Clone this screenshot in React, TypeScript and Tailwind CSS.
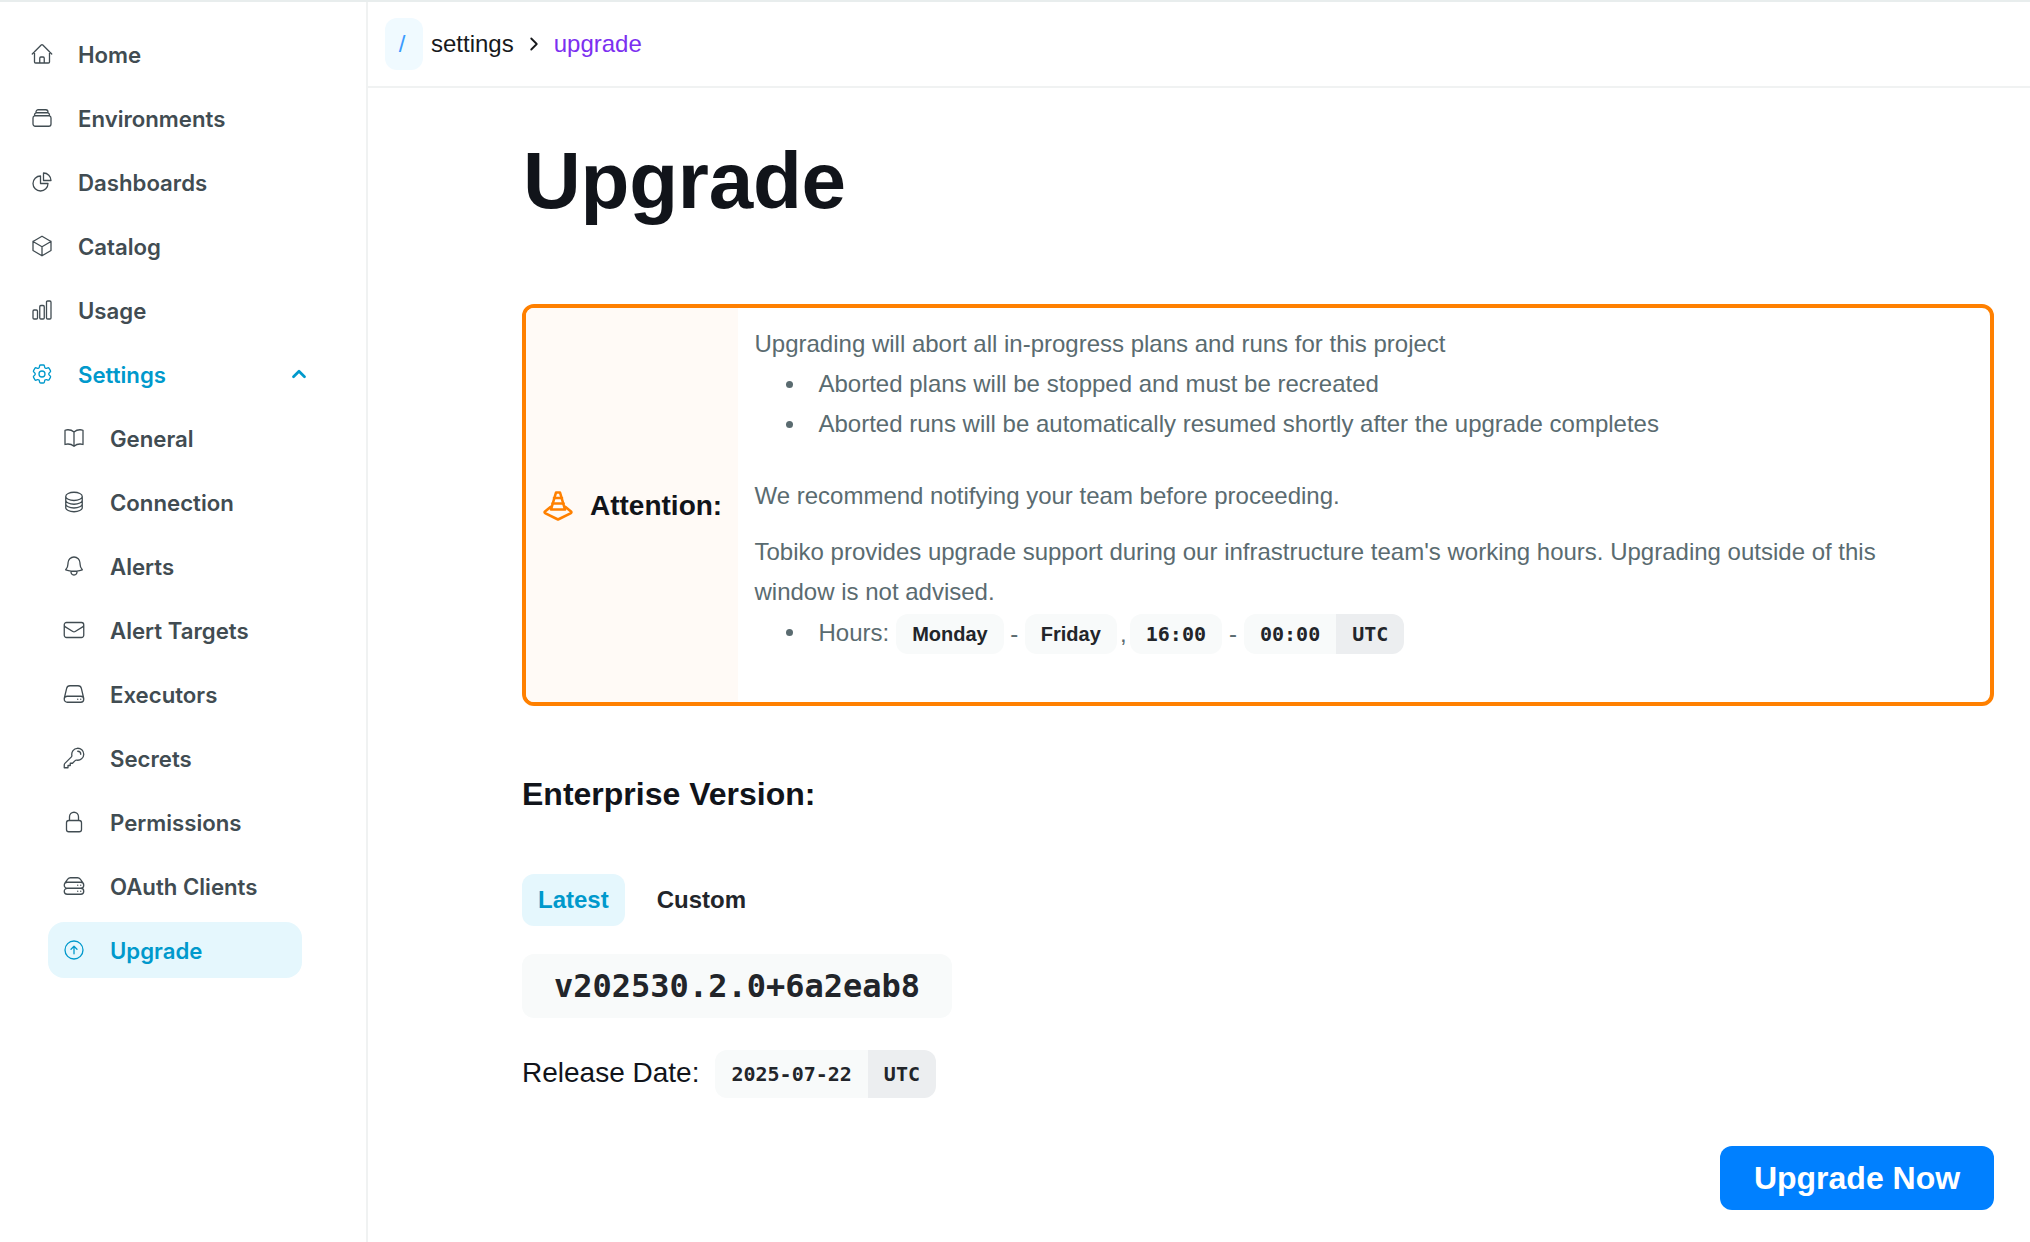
import React from 'react';
import { ChevronRight, ChevronUp } from 'lucide-react';
import {
  HiOutlineHome,
  HiOutlineRectangleStack,
  HiOutlineChartPie,
  HiOutlineCube,
  HiOutlineChartBar,
  HiOutlineCog6Tooth,
  HiOutlineBookOpen,
  HiOutlineCircleStack,
  HiOutlineBell,
  HiOutlineEnvelope,
  HiOutlineServer,
  HiOutlineKey,
  HiOutlineLockClosed,
  HiOutlineServerStack,
  HiOutlineArrowUpCircle,
} from 'react-icons/hi2';

const topItems = [
  { label: 'Home', icon: HiOutlineHome },
  { label: 'Environments', icon: HiOutlineRectangleStack },
  { label: 'Dashboards', icon: HiOutlineChartPie },
  { label: 'Catalog', icon: HiOutlineCube },
  { label: 'Usage', icon: HiOutlineChartBar },
];

const subItems = [
  { label: 'General', icon: HiOutlineBookOpen },
  { label: 'Connection', icon: HiOutlineCircleStack },
  { label: 'Alerts', icon: HiOutlineBell },
  { label: 'Alert Targets', icon: HiOutlineEnvelope },
  { label: 'Executors', icon: HiOutlineServer },
  { label: 'Secrets', icon: HiOutlineKey },
  { label: 'Permissions', icon: HiOutlineLockClosed },
  { label: 'OAuth Clients', icon: HiOutlineServerStack },
];

const Cone: React.FC = () => (
  <svg width="32" height="32" viewBox="0 0 32 32" fill="none" stroke="#ff8000" strokeWidth="2.6" strokeLinejoin="round" strokeLinecap="round">
    <path d="M14 3.500h4l5 17H9z" />
    <path d="M12 9h8M10.500 14.500h11" />
    <path d="M8.500 18 3 22.500q-1 1 .5 1.800L16 30.500l12.500-6.200q1.500-.8.500-1.800L23.500 18" />
  </svg>
);

const Chip: React.FC<{ children: React.ReactNode }> = ({ children }) => (
  <span className="inline-flex h-10 items-center rounded-xl bg-[#f8fafa] px-4 text-[20px] font-bold text-[#22252a]">{children}</span>
);

const Bullet: React.FC = () => <span className="mt-[17px] mr-[26px] ml-[31px] h-[7px] w-[7px] shrink-0 rounded-full bg-[#5a6b70]" />;

export default function App() {
  return (
    <div className="flex h-[1242px] w-full overflow-hidden border-t-2 border-[#e8eded] bg-white font-['Liberation_Sans',sans-serif]">
      {/* Sidebar */}
      <aside className="w-[368px] shrink-0 border-r-2 border-[#f0f2f2] pt-6 pl-4 font-['Inter',sans-serif]">
        <nav className="flex w-[296px] flex-col gap-2 text-[22.200px] font-semibold text-[#414c52]">
          {topItems.map((item) => (
            <a key={item.label} className="flex h-14 items-center gap-6 pl-3.5">
              <item.icon size={24} strokeWidth={1.3} />
              <span className="pt-[2px]">{item.label}</span>
            </a>
          ))}
          <a className="flex h-14 items-center gap-6 pl-3.5 text-[#0099cc]">
            <HiOutlineCog6Tooth size={24} strokeWidth={1.3} />
            <span className="pt-[2px]">Settings</span>
            <ChevronUp size={22} strokeWidth={3} className="mr-[2px] ml-auto" />
          </a>
          <div className="flex flex-col gap-2 pr-2.5 pl-8">
            {subItems.map((item) => (
              <a key={item.label} className="flex h-14 items-center gap-6 pl-3.5">
                <item.icon size={24} strokeWidth={1.3} />
                <span className="pt-[2px]">{item.label}</span>
              </a>
            ))}
            <a className="flex h-14 items-center gap-6 rounded-2xl bg-[#e5f7fd] pl-3.5 text-[#0099cc]">
              <HiOutlineArrowUpCircle size={24} strokeWidth={1.3} />
              <span className="pt-[2px]">Upgrade</span>
            </a>
          </div>
        </nav>
      </aside>

      <main className="min-w-0 flex-1">
        {/* Breadcrumb */}
        <header className="flex h-[86px] items-center border-b-2 border-[#f0f2f2] pl-[17px] text-[24px] text-[#17191c]">
          <span className="flex h-[52px] w-[38px] items-center justify-center rounded-xl bg-[#f0faff] pr-[4px] text-[#3b9bff]">/</span>
          <span className="ml-2">settings</span>
          <ChevronRight size={22} strokeWidth={2} className="mr-[9px] ml-[9px]" />
          <span className="text-[#7c2ff0]">upgrade</span>
        </header>

        <div className="pt-[45px] pr-9 pl-[154px]">
          <h1 className="pl-px text-[80px] leading-[96px] font-bold tracking-[-0.250px] text-[#11141a]">Upgrade</h1>

          {/* Attention box */}
          <section className="mt-[75px] flex h-[402px] overflow-hidden rounded-xl border-4 border-[#ff8000]">
            <div className="flex w-[212px] shrink-0 items-center gap-[16px] bg-[#fffaf6] pl-4">
              <Cone />
              <span className="pt-[2px] text-[28px] font-bold text-[#11141a]">Attention:</span>
            </div>
            <div className="flex-1 pt-4 pr-12 pl-[16.500px] text-[24px] leading-10 text-[#5a6b70]">
              <p>Upgrading will abort all in-progress plans and runs for this project</p>
              <ul>
                <li className="flex">
                  <Bullet />
                  Aborted plans will be stopped and must be recreated
                </li>
                <li className="flex">
                  <Bullet />
                  Aborted runs will be automatically resumed shortly after the upgrade completes
                </li>
              </ul>
              <p className="mt-8">We recommend notifying your team before proceeding.</p>
              <p className="mt-4">
                Tobiko provides upgrade support during our infrastructure team's working hours. Upgrading outside of this window is not advised.
              </p>
              <ul>
                <li className="flex">
                  <Bullet />
                  <div className="flex items-center pt-[2px]">
                    <span className="mt-[-2px] mr-[7px]">Hours:</span>
                    <Chip>Monday</Chip>
                    <span className="w-[21px] text-center">-</span>
                    <Chip>Friday</Chip>
                    <span className="w-[13px] text-center">,</span>
                    <span className="inline-flex h-10 items-center rounded-xl bg-[#f8fafa] px-4 font-['DejaVu_Sans_Mono',monospace] text-[20px] font-bold text-[#22252a]">16:00</span>
                    <span className="w-[22px] text-center">-</span>
                    <div className="flex h-10 overflow-hidden rounded-xl font-['DejaVu_Sans_Mono',monospace] text-[20px] font-bold text-[#22252a]">
                      <span className="flex items-center bg-[#f8fafa] px-4">00:00</span>
                      <span className="flex items-center bg-[#eceef0] px-4">UTC</span>
                    </div>
                  </div>
                </li>
              </ul>
            </div>
          </section>

          <h2 className="mt-[68px] text-[32px] leading-10 font-bold text-[#11141a]">Enterprise Version:</h2>

          {/* Tabs */}
          <div className="mt-[60px] flex gap-4 text-[24px] font-bold">
            <button className="h-[52px] rounded-xl bg-[#e5f7fd] px-4 text-[#0099cc]">Latest</button>
            <button className="h-[52px] rounded-xl px-4 text-[#22252a]">Custom</button>
          </div>

          <div className="mt-7 flex h-16 w-fit items-center rounded-xl bg-[#f8fafa] px-8 font-['DejaVu_Sans_Mono',monospace] text-[32px] font-bold text-[#22252a]">
            v202530.2.0+6a2eab8
          </div>

          <div className="mt-8 flex items-center gap-4">
            <span className="pb-[2px] text-[28px] text-[#11141a]">Release Date:</span>
            <div className="flex h-12 overflow-hidden rounded-xl font-['DejaVu_Sans_Mono',monospace] text-[20px] font-bold text-[#22252a]">
              <span className="flex items-center bg-[#f8fafa] px-4">2025-07-22</span>
              <span className="flex items-center bg-[#eceef0] px-4">UTC</span>
            </div>
          </div>

          <div className="mt-12 flex justify-end">
            <button className="h-16 w-[274px] rounded-xl bg-[#0080ff] text-[32px] font-bold text-white">Upgrade Now</button>
          </div>
        </div>
      </main>
    </div>
  );
}
